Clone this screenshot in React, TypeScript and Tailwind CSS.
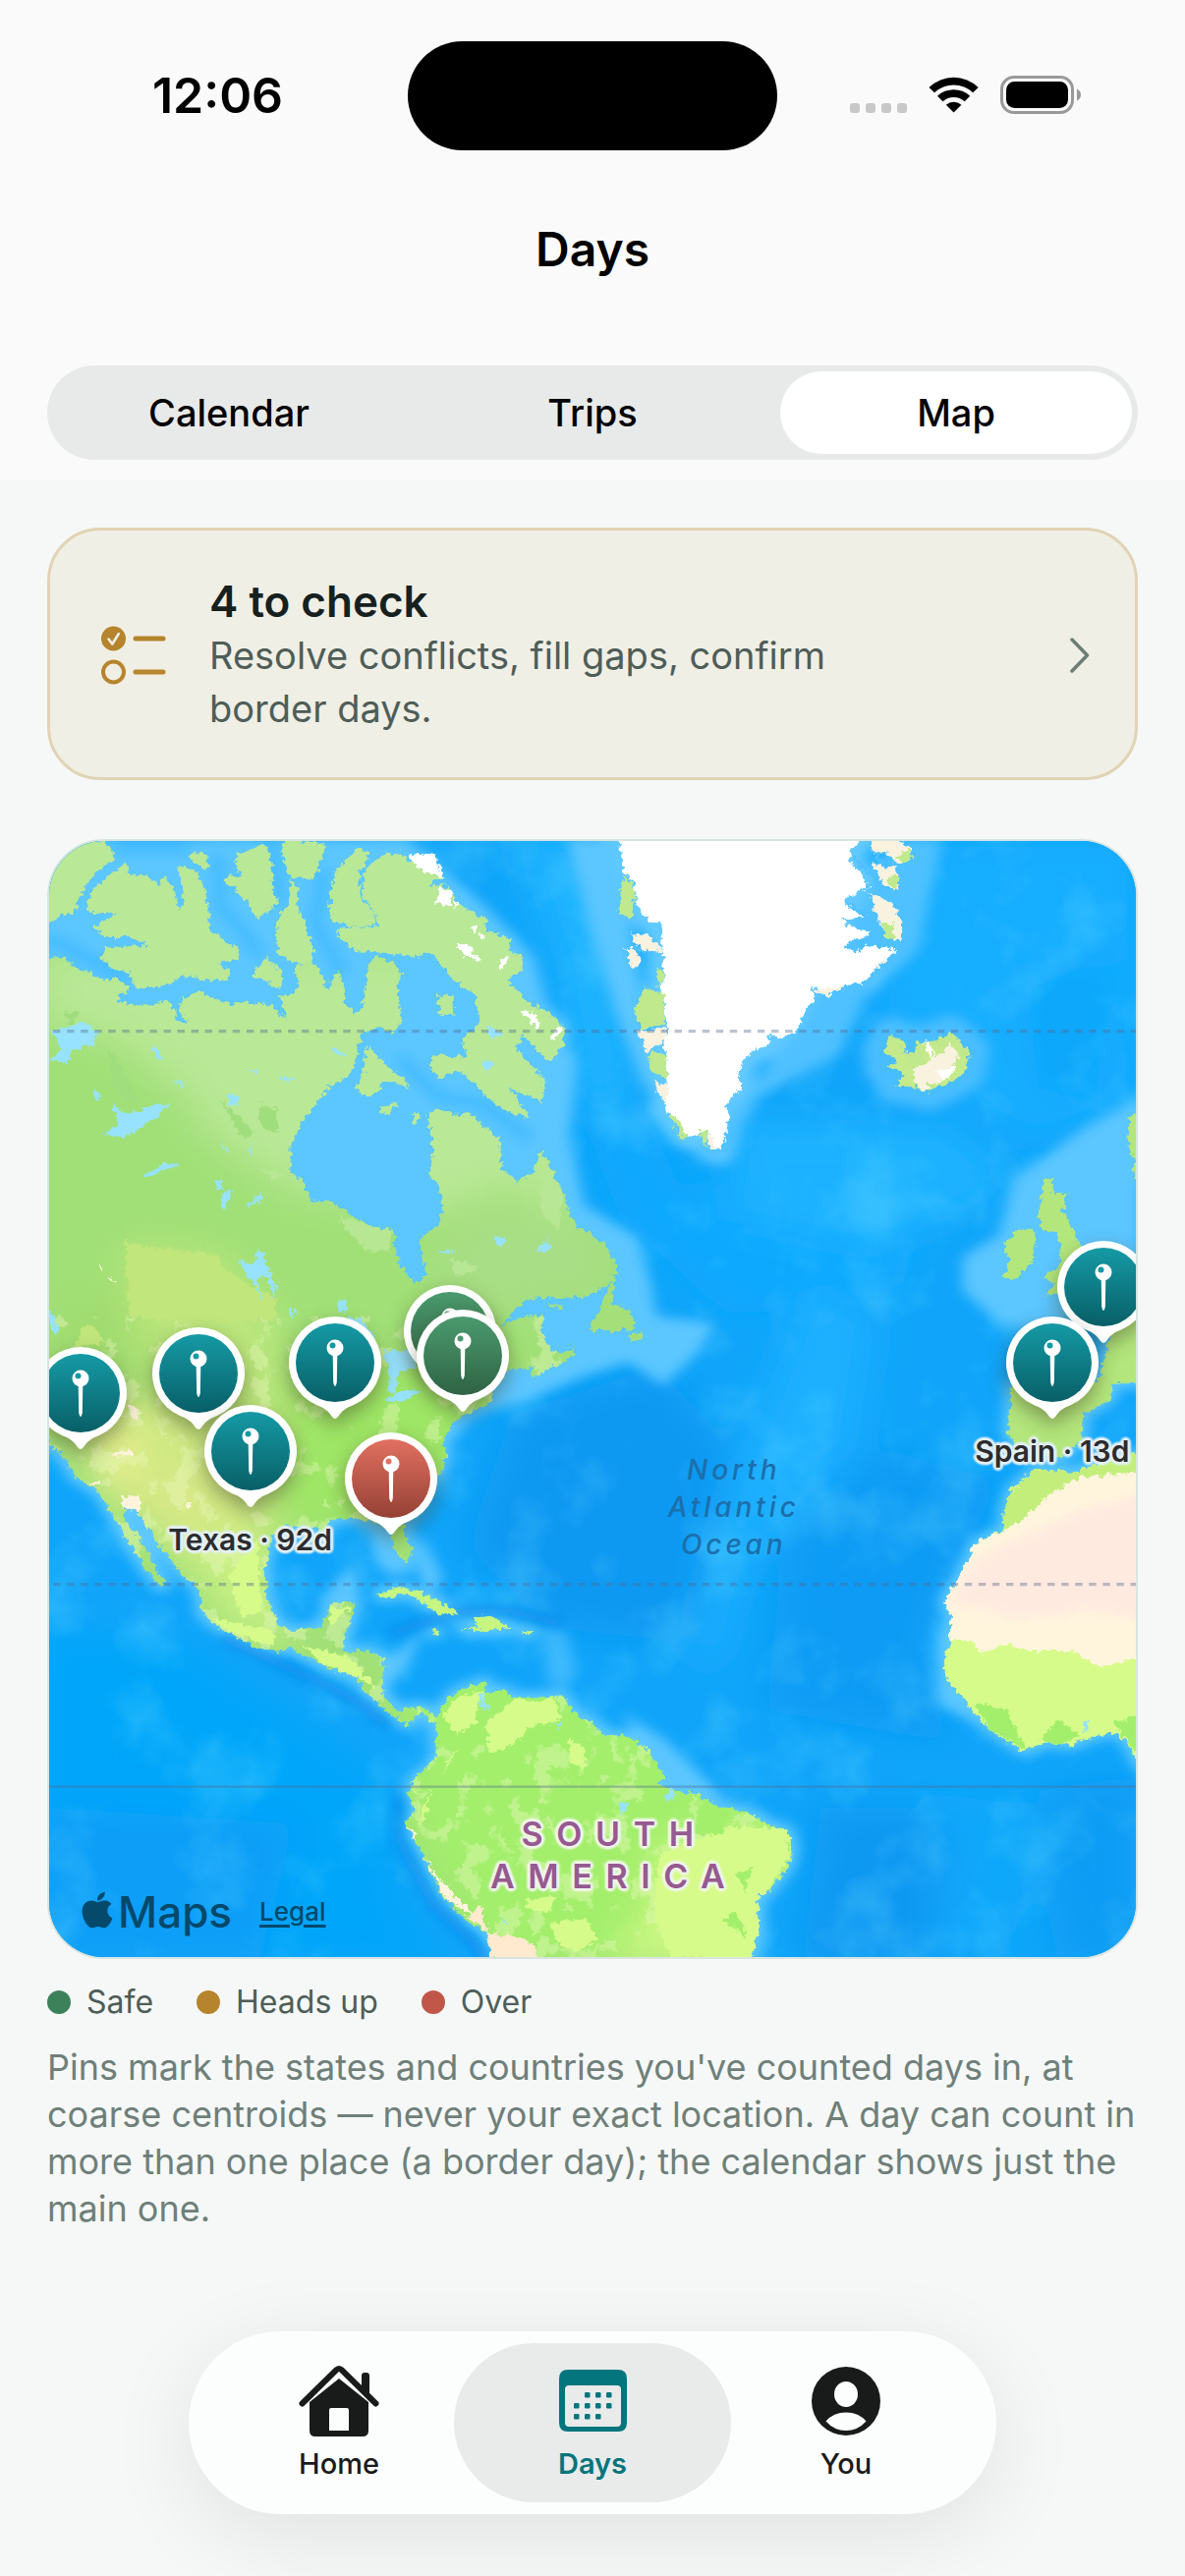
import { useState } from "react";
import { clsx } from "clsx";
import { FaApple } from "react-icons/fa";

type Tone = "teal" | "green" | "red";

interface IPin {
	id: string;
	// Position inside the map, in percent of its width and height
	x: number;
	y: number;
	tone: Tone;
	name: string;
	label?: string;
}

const PINS: IPin[] = [
	{ id: "london", x: 97, y: 40, tone: "teal", name: "England" },
	{ id: "quebec", x: 36.9, y: 43.9, tone: "green", name: "Vermont" },
	{ id: "ny", x: 38.1, y: 46.1, tone: "green", name: "New York" },
	{ id: "mn", x: 26.3, y: 46.7, tone: "teal", name: "Illinois" },
	{ id: "spain", x: 92.3, y: 46.7, tone: "teal", name: "Spain", label: "Spain · 13d" },
	{ id: "utah", x: 13.75, y: 47.7, tone: "teal", name: "Colorado" },
	{ id: "ca", x: 2.9, y: 49.5, tone: "teal", name: "California" },
	{ id: "texas", x: 18.5, y: 54.7, tone: "teal", name: "Texas", label: "Texas · 92d" },
	{ id: "florida", x: 31.5, y: 57.1, tone: "red", name: "Florida" },
];

const TONES: Record<Tone, [string, string]> = {
	teal: ["#159aa5", "#085f67"],
	green: ["#4b9a6e", "#2f6344"],
	red: ["#e17061", "#954135"],
};

const LEGEND = [
	{ label: "Safe", dot: "bg-[#3d815a]" },
	{ label: "Heads up", dot: "bg-[#b5842c]" },
	{ label: "Over", dot: "bg-[#c05748]" },
];

const VIEWS = ["Calendar", "Trips", "Map"];

const MAINLAND =
	"M0 420L40 405L70 403L100 435L140 450L165 468L215 468L240 490L247 510L218 520L218 540L280 552L325 545L345 530L365 550L380 590L395 612L405 600L385 570L390 530L440 507L480 530L530 552L580 540L630 550L650 560L675 595L670 550L660 520L690 525L715 490L700 440L720 420L745 410L770 440L795 510L805 470L820 450L840 480L840 540L865 582L885 560L900 500L905 420L930 400L975 420L998 450L985 500L998 600L970 632L930 615L885 640L870 720L845 775L805 790L775 830L745 870L710 930L690 980L690 1060L720 1080L745 1150L800 1145L850 1185L910 1225L975 1235L985 1330L1035 1402L1065 1370L1045 1260L1100 1220L1112 1160L1100 1110L1070 1060L1085 1000L1070 880L1100 868L1145 885L1180 875L1220 920L1268 960L1270 1050L1315 1090L1360 1060L1380 990L1410 1050L1445 1130L1455 1180L1480 1230L1514 1240L1555 1280L1590 1340L1588 1380L1560 1408L1500 1440L1340 1445L1320 1470L1270 1525L1300 1515L1390 1490L1380 1555L1410 1610L1465 1610L1480 1575L1465 1625L1350 1690L1365 1650L1290 1665L1245 1720L1245 1760L1190 1790L1140 1820L1110 1880L1120 1920L1105 1980L1060 2020L1040 2080L1000 2130L1025 2220L1010 2255L975 2210L970 2160L940 2130L850 2115L795 2120L790 2150L680 2135L640 2170L620 2270L625 2360L660 2440L700 2460L775 2450L800 2380L870 2372L850 2450L830 2520L905 2520L950 2545L940 2640L985 2705L1050 2690L1095 2720L1130 2660L1160 2640L1230 2615L1220 2650L1285 2640L1300 2665L1440 2660L1470 2710L1514 2735L1544 2775L1624 2785L1664 2810L1704 2870L1719 2900L1704 2930L1754 2950L1814 2960L1864 2995L1944 3010L2014 3055L2059 3070L2074 3130L2059 3180L2004 3260L1979 3265L1979 3380L1954 3480L1250 3480L1230 3380L1180 3350L1110 3270L1050 3130L1005 3050L1035 3010L1015 2960L1030 2910L1060 2890L1095 2840L1090 2750L1050 2705L1015 2748L960 2710L900 2650L870 2600L800 2575L740 2540L690 2510L650 2525L600 2510L510 2460L450 2410L440 2330L390 2280L330 2200L275 2100L230 2080L240 2130L285 2190L310 2250L345 2315L335 2325L300 2280L230 2160L205 2110L160 2030L100 1990L60 1920L0 1860Z";

const ISLANDS = [
	"M0 30L180 48L213 100L150 150L120 200L95 270L60 275L27 300L0 300Z",
	"M235 115L245 150L300 155L330 185L340 150L370 190L385 255L400 240L380 120L430 140L450 180L465 250L470 320L550 380L545 410L490 420L525 440L520 470L450 475L415 455L330 495L260 495L250 450L190 435L170 400L180 375L300 365L250 345L180 345L150 310L215 270L150 270L125 240L150 190Z",
	"M410 100L440 80L465 90L460 140L430 120Z",
	"M545 90L620 55L640 110L640 190L655 240L600 285L560 220L510 170L520 150L560 160L540 120Z",
	"M680 40L790 60L755 165L690 160L665 90Z",
	"M690 165L715 190L705 240L730 300L755 380L745 420L700 420L655 390L650 320L660 270L690 240Z",
	"M880 70L915 80L880 140L885 220L925 270L920 305L870 310L800 290L800 200L820 130Z",
	"M905 120L960 90L1000 85L1010 110L1050 90L1112 155L1070 180L1130 190L1150 240L1200 265L1230 290L1225 320L1300 345L1290 380L1325 400L1330 445L1290 470L1340 540L1400 570L1445 620L1440 670L1405 722L1380 700L1330 640L1310 680L1385 770L1385 850L1350 830L1290 800L1352 895L1300 880L1240 840L1160 750L1100 770L1070 740L1090 700L1170 705L1165 650L1210 600L1200 520L1140 470L1080 390L1040 400L960 390L870 385L820 340L820 315L930 310L925 270L895 220L890 170Z",
	"M900 670L940 720L1000 770L1020 800L950 780L910 835L865 805L890 760Z",
	"M1100 515L1140 520L1140 575L1100 580Z",
	"M945 860L985 845L960 885L940 880Z",
	"M1030 880L1043 880L1038 918L1024 900Z",
	"M620 400L670 450L665 495L640 490L585 460Z",
	"M1574 1395L1584 1420L1574 1460L1624 1480L1640 1520L1634 1535L1594 1545L1514 1545L1534 1490L1555 1440Z",
	"M1628 1555L1655 1550L1650 1572L1632 1575Z",
	"M1398 1452L1442 1468L1440 1480L1408 1470Z",
	"M930 2350L990 2325L1050 2345L1110 2375L1155 2410L1095 2410L1060 2375L1010 2345L950 2357Z",
	"M1190 2420L1240 2415L1300 2450L1240 2460L1160 2456L1212 2446Z",
	"M1072 2455L1100 2460L1090 2470Z",
	"M1325 2458L1360 2458L1350 2468L1328 2468Z",
	"M2764 1075L2794 1080L2784 1120L2832 1125L2814 1180L2834 1210L2864 1280L2914 1330L2894 1400L2764 1440L2794 1400L2759 1380L2804 1350L2814 1290L2799 1245L2764 1240L2749 1200Z",
	"M2694 1235L2739 1235L2734 1330L2684 1385L2654 1382L2669 1330L2652 1280Z",
	"M2999 885L3030 880L3030 1080L3010 1080L3012 1010L2996 985Z",
	"M3030 1480L2954 1520L2914 1700L2674 1710L2670 1800L2664 1850L2684 1900L2754 1920L2814 1930L2869 1880L2874 1800L2949 1750L2954 1700L3030 1705Z",
	"M2739 1965L2844 1975L2954 1930L3030 1920L3030 2880L2994 2800L2964 2768L2904 2780L2834 2810L2774 2800L2704 2826L2614 2760L2544 2670L2494 2600L2489 2540L2504 2500L2509 2420L2489 2370L2544 2270L2574 2190L2654 2150L2654 2090L2674 2030Z",
];

const ICELAND =
	"M2344 640L2379 660L2384 700L2409 690L2412 660L2444 665L2464 655L2504 635L2534 660L2559 690L2544 760L2494 790L2444 815L2414 800L2354 795L2379 765L2359 740L2324 738L2364 725L2319 690Z";

const GREENLAND =
	"M1584 20L1604 90L1609 140L1639 180L1639 230L1674 290L1709 300L1717 390L1714 440L1729 455L1704 500L1722 540L1729 620L1719 680L1726 740L1729 800L1719 870L1739 880L1759 920L1784 950L1814 945L1839 930L1844 990L1874 995L1889 940L1899 890L1889 855L1914 820L1934 800L1919 765L1939 720L1959 690L2004 670L2009 640L2034 655L2089 625L2104 570L2134 530L2124 490L2164 520L2214 495L2274 475L2314 420L2359 385L2299 365L2244 385L2214 370L2239 350L2290 330L2234 310L2204 290L2284 275L2250 268L2214 225L2254 205L2284 190L2265 160L2229 110L2234 75L2284 20Z";

const LAKES = [
	"M35 630L120 600L165 630L150 670L90 690L80 730L30 720L60 680Z",
	"M200 855L250 880L320 850L360 855L300 910L240 955L175 945L220 915Z",
	"M345 1028L390 1038L350 1050L315 1070L290 1072Z",
	"M485 1080L505 1085L500 1112L484 1115ZM505 1120L535 1110L520 1150L500 1172Z",
	"M605 1285L652 1410L640 1442L625 1370L600 1380L612 1442L590 1400L545 1330L592 1340Z",
	"M518 820L556 822L545 858L520 850ZM575 745L606 750L600 762ZM660 768L702 775L680 782Z",
	"M575 1165L608 1120L612 1140ZM800 670L846 702L830 706L805 690Z",
	"M140 810L172 825L160 838ZM370 768L405 795L385 792ZM310 665L340 712L325 718Z",
	"M572 1010L590 960L582 1012ZM500 960L525 998L512 990Z",
	"M820 1450L845 1455L840 1492L826 1478ZM690 1475L706 1488L690 1510Z",
	"M1255 1255L1285 1262L1275 1288L1258 1280ZM1365 1300L1400 1262L1408 1295L1370 1305ZM1090 1300L1160 1300L1110 1308Z",
	"M1225 710L1250 730L1235 752L1218 740ZM1230 610L1275 640L1240 655Z",
	"M835 1500L880 1505L925 1560L915 1580L870 1540Z",
	"M945 1600L1035 1605L1040 1660L992 1668L975 1735L958 1730L960 1660Z",
	"M950 1755L1000 1722L1055 1725L1000 1762Z",
	"M1214 2645L1236 2700L1216 2695ZM1420 2745L1438 2735L1432 2758ZM1265 3335L1295 3360L1272 3355Z",
	"M2872 2733L2886 2736L2884 2768L2872 2765ZM1590 2985L1625 2985L1602 3025ZM1720 2980L1740 2940L1750 2975Z",
	"M27 1480L55 1530L45 1558L27 1530Z",
];

const SNOW = [
	"M1020 90L1085 90L1112 158L1070 145L1020 108Z",
	"M1100 190L1138 200L1130 245L1090 238Z",
	"M1155 355L1185 370L1216 418L1170 400L1152 375Z",
	"M1322 565L1365 572L1382 612L1365 620Z",
	"M1275 405L1290 400L1280 436L1262 438ZM1185 305L1205 315L1200 328ZM1210 330L1222 335L1216 352ZM1142 225L1153 238L1145 254Z",
	"M1408 640L1440 610L1430 640L1412 655Z",
	"M2460 755L2510 735L2518 755L2490 778ZM2432 662L2445 662L2465 700L2455 718Z",
];

const CREAM = [
	"M2284 40L2354 40L2400 75L2370 120L2354 110L2330 80L2290 90Z",
	"M2290 115L2360 130L2364 200L2325 185L2300 140Z",
	"M2284 205L2344 240L2374 290L2374 352L2334 345L2304 280Z",
	"M2130 500L2220 495L2165 522ZM2290 440L2340 400L2325 425Z",
	"M1625 335L1665 330L1710 370L1715 385L1665 385ZM1615 380L1635 370L1660 420L1630 442Z",
	"M1645 630L1725 615L1725 655L1670 690Z",
	"M1690 780L1730 790L1730 845L1705 830Z",
	"M1838 930L1870 990L1842 992Z",
	"M2404 745L2480 700L2504 660L2530 700L2500 770L2440 810L2412 795Z",
];

const GREEN_COAST = [
	"M1605 150L1638 190L1630 280L1595 270Z",
	"M1664 495L1718 515L1725 600L1655 625L1638 560Z",
	"M1682 690L1722 700L1728 775L1678 750Z",
	"M1735 875L1765 910L1785 955L1765 955Z",
	"M1815 930L1838 930L1836 985L1818 955Z",
	"M1695 435L1728 455L1705 495Z",
	"M2360 100L2385 75L2404 95L2375 118ZM2330 155L2368 155L2350 200ZM2322 300L2352 300L2350 352L2325 340Z",
	"M2385 700L2440 680L2430 730L2385 740ZM2460 660L2510 640L2505 665L2470 690ZM2524 680L2555 690L2540 720ZM2445 790L2470 785L2455 808Z",
];

const MapCanvas = () => {
	return (
		<svg
			viewBox="27 48 2990 3408"
			preserveAspectRatio="none"
			className="block size-full"
			aria-hidden="true"
		>
			<defs>
				<filter id="coast" filterUnits="userSpaceOnUse" x="0" y="0" width="3060" height="3480">
					<feTurbulence type="fractalNoise" baseFrequency="0.06" numOctaves="3" seed="4" />
					<feDisplacementMap in="SourceGraphic" scale="28" xChannelSelector="R" yChannelSelector="G" />
				</filter>
				<filter id="soft" filterUnits="userSpaceOnUse" x="-200" y="-200" width="3500" height="3900">
					<feGaussianBlur stdDeviation="18" />
				</filter>
				<filter id="haze" filterUnits="userSpaceOnUse" x="-200" y="-200" width="3500" height="3900">
					<feGaussianBlur stdDeviation="55" />
				</filter>
				<filter id="swell" filterUnits="userSpaceOnUse" x="0" y="0" width="3060" height="3480">
					<feTurbulence type="fractalNoise" baseFrequency="0.005 0.004" numOctaves="4" seed="11" />
					<feColorMatrix values="0 0 0 0 0.16  0 0 0 0 0.73  0 0 0 0 1  2.6 0 0 0 -1.3" />
				</filter>
				<filter id="scrub" filterUnits="userSpaceOnUse" x="0" y="1500" width="3060" height="1980">
					<feTurbulence type="fractalNoise" baseFrequency="0.014 0.01" numOctaves="3" seed="7" />
					<feColorMatrix values="0 0 0 0 0.84  0 0 0 0 0.96  0 0 0 0 0.53  16 0 0 0 -9" />
				</filter>
				<clipPath id="mainland">
					<path d={MAINLAND} />
				</clipPath>
				<clipPath id="africa">
					<path d={ISLANDS[ISLANDS.length - 1]} />
				</clipPath>
			</defs>

			<rect x="0" y="0" width="3060" height="3480" fill="#10a5fa" />

			{/* Sea floor */}
			<g filter="url(#haze)">
				<path d="M0 2450L400 2500L1000 2950L980 3300L1150 3480H0Z" fill="#06a6fa" />
				<path d="M0 3000L700 3050L600 3480H0Z" fill="#109ff8" />
				<path d="M1300 30L1560 30L1600 420L1640 800L1480 900L1420 420Z" fill="#1fb3ff" />
				<path d="M1480 850L1680 900L1760 1100L2300 1050L2400 1400L1900 1500L1600 1200Z" fill="#09a9ff" />
				<path d="M2330 30L3030 30L3030 900L2700 960L2300 600Z" fill="#16aeff" />
				<path d="M2720 500L2950 400L2900 850L2750 800Z" fill="#0aa6fb" />
				<path d="M1900 900L2500 900L2700 1100L2300 1300L1900 1200Z" fill="#1bb2ff" />
				<path d="M1300 1800L1700 1650L1900 1900L1850 2500L1400 2450L1180 2200Z" fill="#0d98f2" />
				<path d="M2300 1900L2640 2000L2440 2500L2500 2800L2000 2700L2050 2200Z" fill="#0d9bf5" />
				<path d="M2150 3000L2500 3000L2450 3480L2100 3480Z" fill="#0a98f2" />
				<path d="M2750 2950L3030 2900L3030 3480L2800 3480Z" fill="#0f9cf5" />
				<path d="M2120 1400L2300 1500L2250 1900L1950 2200L1850 2600L1780 2500L1900 2000Z" fill="#1cb0ff" />
				<path d="M2400 2950L2800 3000L2650 3480L2450 3480L2560 3200Z" fill="#08a8fb" />
			</g>
			<g opacity="0.3">
				<rect x="0" y="0" width="3060" height="3480" filter="url(#swell)" />
			</g>

			{/* Shallow water */}
			<g filter="url(#soft)">
				<g fill="#63caff" stroke="#63caff" strokeWidth="50" strokeLinejoin="round">
					<path d={MAINLAND} strokeWidth="34" />
					{ISLANDS.map((island) => (
						<path key={island} d={island} strokeWidth="30" />
					))}
					<path d={GREENLAND} strokeWidth="80" />
				</g>
				<path d={ICELAND} fill="#4abeff" stroke="#4abeff" strokeWidth="110" strokeLinejoin="round" />
				<g fill="#5cc6ff">
					<path d="M0 40L1010 40L1230 250L1360 400L1400 560L1480 720L1460 950L1500 1160L1650 1260L1700 1500L1860 1520L1820 1600L1720 1710L1620 1640L1500 1680L1340 1760L1200 1790L1140 1880L900 1400L600 1200L0 700Z" />
					<path d="M1450 40L1584 40L1720 900L1650 760L1580 560L1540 400Z" />
					<path d="M2350 40L2480 40L2420 380L2300 460L2200 700L1980 830L1900 1000L1800 1020L2100 600Z" fill="#50c1ff" />
					<path d="M3030 830L2880 920L2680 1080L2640 1250L2540 1320L2540 1420L2640 1520L2720 1540L2900 1500L3030 1480Z" />
					<path d="M910 2130L1000 2130L1030 2280L960 2290L920 2240Z" />
					<path d="M1050 2160L1110 2300L1080 2350L1040 2280Z" />
					<path d="M770 2370L860 2260L880 2340L850 2400L790 2420Z" />
					<path d="M950 2560L1060 2450L1010 2570L960 2630Z" />
					<path d="M1380 2440L1450 2460L1480 2590L1440 2640L1400 2620Z" opacity="0.6" />
					<path d="M1600 2710L1720 2790L1850 2930L1900 3000L1740 2960Z" />
					<path d="M2470 2400L2470 2680L2600 2760L2520 2600Z" />
				</g>
				{/* Deeper channels between the arctic islands */}
				<g stroke="#45bcff" strokeWidth="40" strokeLinecap="round" fill="none">
					<path d="M220 70L400 70M490 100L500 250L580 350L600 390M640 60L660 220M780 150L760 300L830 440" />
					<path d="M1000 720L1100 830L1220 850L1340 950M40 350L140 410L230 460" />
				</g>
			</g>
			{/* Deep trenches along the Pacific coast */}
			<g stroke="#0a8cec" strokeWidth="26" fill="none" filter="url(#soft)">
				<path d="M500 2480L640 2550L780 2620L880 2680L960 2750" />
				<path d="M985 2960L990 3100L1080 3290L1200 3420L1240 3480" />
				<path d="M960 2470L1150 2400L1300 2400L1440 2440" />
			</g>

			<g filter="url(#coast)">
				<path d={MAINLAND} fill="#a1e077" />
				<g clipPath="url(#mainland)">
					<g filter="url(#haze)">
						<path d="M0 380L1100 380L1400 900L1480 1240L1300 1100L1070 1190L1000 1160L700 1120L480 960L380 800L180 640L0 600Z" fill="#b9e896" />
						<path d="M1200 1160L1600 1240L1560 1440L1200 1500L1060 1350Z" fill="#a8de85" />
						<path d="M60 1450L300 1400L300 1700L0 1800Z" fill="#a0dc70" />
						<path d="M700 1700L1250 1620L1120 2000L950 2140L660 2130Z" fill="#9ee665" />
						<path d="M230 1280L500 1310L650 1500L680 1800L640 2100L400 1900L260 1500Z" fill="#bbe67c" />
						<path d="M80 1760L400 1750L650 2130L560 2440L380 2230L180 2030Z" fill="#d0e983" />
						<path d="M160 1850L240 1840L260 2050L180 2030Z" fill="#f1ef93" />
						<path d="M380 1990L430 2000L420 2110L370 2080Z" fill="#eee594" />
						<path d="M1010 2450L2060 2640L2100 3480L1240 3480L1000 3000Z" fill="#a3ef6c" />
						<path d="M1700 3120L2080 3060L2010 3480L1560 3480L1690 3300Z" fill="#cdf884" />
						<path d="M420 2200L620 2180L700 2500L520 2450Z" fill="#c9f184" />
					</g>
					<g opacity="0.4">
						<rect x="0" y="1500" width="3060" height="1980" filter="url(#scrub)" />
					</g>
					<g fill="#c1e67c">
						<path d="M235 1270L300 1290L495 1310L500 1345L570 1400L650 1440L650 1510L400 1520L250 1500Z" />
						<path d="M120 1525L155 1530L180 1580L100 1595Z" />
					</g>
					<g fill="#a0dd7d">
						<path d="M195 690L255 790L280 850L240 850L200 790ZM500 840L560 900L590 940L560 960ZM610 850L655 870L650 940L610 920ZM60 570L110 570L90 610Z" />
					</g>
					<g fill="#b9e896" opacity="0.9">
						<path d="M820 1190L970 1240L960 1300L900 1300L850 1240ZM1380 1000L1440 1120L1430 1240L1380 1180ZM1130 1320L1215 1350L1150 1380ZM610 1050L690 1070L650 1080Z" />
					</g>
					<g fill="#d6fb8a">
						<path d="M1110 2720L1140 2670L1220 2640L1200 2740L1150 2780Z" />
						<path d="M1235 2830L1230 2740L1310 2665L1370 2680L1410 2660L1440 2730L1360 2750L1300 2810L1250 2833Z" />
						<path d="M1455 2790L1500 2820L1500 2880L1460 2860Z" />
						<path d="M1704 3140L1900 3060L2059 3060L2074 3130L2000 3260L1979 3460L1740 3460L1690 3330Z" />
						<path d="M1340 3280L1420 3270L1400 3320L1340 3310ZM1410 3350L1500 3340L1540 3400L1480 3440L1420 3410Z" />
						<path d="M800 2390L860 2385L800 2450ZM720 2500L860 2545L930 2640L900 2620L780 2560ZM520 2290L600 2180L610 2400L560 2420ZM470 2420L640 2460L650 2510L520 2460Z" />
						<path d="M1125 2850L1150 2820L1110 2900ZM1080 2930L1060 3030L1040 3060Z" />
					</g>
					<g fill="#a3ef6c">
						<path d="M1814 2990L1900 3000L1880 3080L1800 3080ZM1920 3200L1960 3180L1940 3260ZM1880 3340L1920 3320L1950 3400ZM2050 3100L2074 3110L2060 3140Z" />
					</g>
					<g fill="#fef3dc">
						<path d="M225 2050L280 2045L275 2100L225 2085ZM200 1915L255 1905L255 1925L205 1930ZM130 2005L175 2005L160 2018ZM405 2065L420 2070L412 2095Z" />
						<path d="M1005 3050L1035 3080L1035 3100L1010 3090ZM1060 3150L1120 3280L1200 3340L1190 3320L1110 3230Z" />
						<path d="M1180 3330L1215 3300L1235 3380L1330 3400L1370 3430L1365 3480L1240 3480L1230 3380Z" fill="#ffe9cf" />
						<path d="M248 1770L270 1770L268 1815L250 1810ZM165 1338L180 1355L172 1362ZM190 1375L210 1398L195 1390Z" />
					</g>
				</g>
				{ISLANDS.map((island, index) => (
					<path
						key={island}
						d={island}
						fill={index < 13 ? "#b9e896" : index < 16 ? "#a5df7a" : index < 20 ? "#c6f580" : "#b3e67c"}
					/>
				))}
				<g clipPath="url(#africa)">
					<path d="M2400 1900L3030 1900L3030 2880L2400 2880Z" fill="#d6fb8a" />
					<path d="M2739 1960L3030 1900L3030 1990L2864 1990L2654 2180L2640 2080Z" fill="#c3ee7b" />
					<path
						d="M3030 1975L2864 1990L2784 2040L2714 2110L2654 2155L2560 2190L2520 2270L2470 2370L2500 2400L2500 2490L2564 2490L2594 2530L2664 2500L2714 2520L2844 2520L2914 2570L3030 2540Z"
						fill="#fff5dd"
					/>
					<g filter="url(#soft)">
						<path d="M3060 2040L2874 2090L2654 2200L2560 2260L2500 2380L2620 2390L2660 2420L2840 2410L2860 2390L3060 2430Z" fill="#ffeae0" />
					</g>
					<g fill="#a3ef6c">
						<path d="M2574 2680L2664 2700L2714 2826L2614 2760ZM2754 2790L2804 2730L2864 2780L2804 2810ZM2950 2740L3030 2720L3030 2850L2990 2790Z" />
					</g>
				</g>
				<path d={GREENLAND} fill="#fff" />
				<path d={ICELAND} fill="#c5ea8b" />
				{CREAM.map((patch) => (
					<path key={patch} d={patch} fill="#f8f2df" />
				))}
				{GREEN_COAST.map((patch) => (
					<path key={patch} d={patch} fill="#bfe98c" />
				))}
				{SNOW.map((patch) => (
					<path key={patch} d={patch} fill="#fff" />
				))}
				{LAKES.map((lake) => (
					<path key={lake} d={lake} fill="#97e3ff" />
				))}
				<g stroke="#4fbfff" strokeWidth="9" fill="none">
					<path d="M2240 100L2290 150L2330 200M2215 235L2270 270L2320 310M2250 380L2290 340L2300 290M2285 70L2330 130M1630 365L1680 400" />
				</g>
			</g>

			{/* Arctic circle, tropic of Cancer and equator */}
			<g stroke="#52698f" strokeOpacity="0.4" fill="none">
				<path d="M0 629H3060" strokeWidth="10" strokeDasharray="20 18" />
				<path d="M0 2318H3060" strokeWidth="10" strokeDasharray="20 18" />
				<path d="M0 2936H3060" strokeWidth="7" />
			</g>
		</svg>
	);
};

const MapPin = ({ pin }: { pin: IPin }) => {
	const [from, to] = TONES[pin.tone];

	return (
		<button
			type="button"
			aria-label={pin.name}
			className="absolute size-[94px] -translate-1/2"
			style={{ left: `${pin.x}%`, top: `${pin.y}%` }}
		>
			<svg viewBox="0 0 94 94" className="size-full overflow-visible drop-shadow-[0_8px_10px_rgba(60,60,30,0.45)]">
				<defs>
					<linearGradient id={`fill-${pin.id}`} x1="0" y1="0" x2="0" y2="1">
						<stop offset="0" stopColor={from} />
						<stop offset="1" stopColor={to} />
					</linearGradient>
				</defs>
				<path
					d="M47 0a47 47 0 0 1 19 90c-8 3-12 6-16 12q-3 4-6 0c-4-6-8-9-16-12A47 47 0 0 1 47 0Z"
					fill="#fff"
				/>
				<circle cx="47" cy="47" r="40" fill={`url(#fill-${pin.id})`} />
				<circle cx="47" cy="32" r="8.5" fill="#fff" />
				<path d="M44.7 39h4.600l-.5 28q-1.800 8-3.600 0Z" fill="#fff" />
				<circle cx="44.500" cy="29.500" r="3" fill={from} />
			</svg>
			{pin.label ? (
				<span className="absolute top-[117px] left-1/2 -translate-x-1/2 text-[30px] leading-[40px] font-semibold whitespace-nowrap text-[#2c2c2e] [text-shadow:0_0_4px_#e4f0f4,0_3px_2px_#e4f0f4,0_-3px_2px_#e4f0f4,3px_0_2px_#e4f0f4,-3px_0_2px_#e4f0f4,2px_2px_2px_#e4f0f4,-2px_-2px_2px_#e4f0f4,2px_-2px_2px_#e4f0f4,-2px_2px_2px_#e4f0f4]">
					{pin.label}
				</span>
			) : null}
		</button>
	);
};

const StatusBar = () => {
	return (
		<div className="grid h-[194px] grid-cols-[1fr_376px_1fr] items-center">
			<time className="justify-self-center pl-7 text-[50px] leading-[60px] font-semibold">12:06</time>
			<div className="h-[111px] rounded-full bg-black" />
			<svg viewBox="0 0 236 40" className="ml-[74px] h-10 w-[236px]" aria-hidden="true">
				<g fill="#c8c8c8">
					<rect x="0" y="28" width="10" height="10" rx="3" />
					<rect x="16" y="28" width="10" height="10" rx="3" />
					<rect x="32" y="28" width="10" height="10" rx="3" />
					<rect x="48" y="28" width="10" height="10" rx="3" />
				</g>
				<path d="M80.500 12 86 17.300a28.500 28.500 0 0 1 39.200 0l5.500-5.300a36 36 0 0 0-50.200 0Z" />
				<path d="m89 20.800 5.500 5.400a16.500 16.500 0 0 1 22.200 0l5.500-5.400a24 24 0 0 0-33.200 0Z" />
				<path d="m97.800 29.800 7.800 7.700 7.800-7.700a11.500 11.500 0 0 0-15.600 0Z" />
				<rect x="154.500" y="1.500" width="72" height="36" rx="12.500" fill="none" stroke="#999" strokeWidth="3" />
				<rect x="159" y="6" width="63" height="27" rx="8.500" />
				<path d="M231 13.500q4 2 4 6t-4 6Z" fill="#999" />
			</svg>
		</div>
	);
};

const ChecklistIcon = () => {
	return (
		<svg viewBox="0 0 66 60" className="h-[60px] w-[66px] shrink-0" aria-hidden="true">
			<circle cx="12.500" cy="13" r="12.500" fill="#b5842c" />
			<path d="m7.500 13.500 3.800 5 6.500-10.500" fill="none" stroke="#f0efe5" strokeWidth="2.600" strokeLinecap="round" strokeLinejoin="round" />
			<circle cx="12.500" cy="47" r="10.500" fill="none" stroke="#b5842c" strokeWidth="4" />
			<path d="M35 13h28M35 47h28" stroke="#b5842c" strokeWidth="5" strokeLinecap="round" />
		</svg>
	);
};

const HomeIcon = () => {
	return (
		<svg viewBox="0 0 82 74" className="h-[74px] w-[82px]" aria-hidden="true" fill="currentColor">
			<path d="M64 11q0-3 3-3h2q3 0 3 3v20l-8-8Z" />
			<path d="M3.500 39.500 38.500 5q2.500-2 5 0l35 34.500" fill="none" stroke="currentColor" strokeWidth="6" strokeLinecap="round" />
			<path fillRule="evenodd" d="M41 14 71 38v29q0 6-6 6H17q-6 0-6-6V38ZM33 44q-2 0-2 2v21h20V46q0-2-2-2Z" />
		</svg>
	);
};

const DaysIcon = () => {
	const dots = [
		[29, 25], [40, 25], [51, 25],
		[18, 36], [29, 36], [40, 36], [51, 36],
		[18, 47], [29, 47], [40, 47],
	];

	return (
		<svg viewBox="0 0 69 74" className="h-[74px] w-[69px]" aria-hidden="true" fill="currentColor">
			<path
				fillRule="evenodd"
				d="M9 5h51q9 0 9 9v45q0 9-9 9H9q-9 0-9-9V14q0-9 9-9Zm1 16q-4 0-4 4v34q0 4 4 4h49q4 0 4-4V25q0-4-4-4Z"
			/>
			{dots.map(([x, y]) => (
				<rect key={`${x}-${y}`} x={x - 3} y={y + 3} width="5.500" height="5.500" rx="1.300" />
			))}
		</svg>
	);
};

const YouIcon = () => {
	return (
		<svg viewBox="0 0 70 74" className="h-[74px] w-[70px]" aria-hidden="true" fill="currentColor">
			<circle cx="35" cy="37" r="35" />
			<ellipse cx="35" cy="30" rx="12" ry="13" fill="#fcfefd" />
			<path d="M14.500 57.500Q22 48.500 35 48.500t20.500 9Q47 67 35 67t-20.500-9.500Z" fill="#fcfefd" />
		</svg>
	);
};

const TABS = [
	{ label: "Home", href: "#home", Icon: HomeIcon },
	{ label: "Days", href: "#days", Icon: DaysIcon },
	{ label: "You", href: "#you", Icon: YouIcon },
];

export default function App() {
	const [view, setView] = useState("Map");

	return (
		<div className="flex min-h-screen flex-col bg-[#f5f8f7] font-[Inter,'Liberation_Sans',sans-serif] text-black">
			<header className="bg-[#fafafa] pb-[21px]">
				<StatusBar />
				<h1 className="pt-7 text-center text-[48px] leading-[64px] font-semibold">Days</h1>
				<div role="tablist" aria-label="View" className="mx-12 mt-[86px] grid h-24 grid-cols-3 rounded-full bg-[#e8eae9]">
					{VIEWS.map((item) => (
						<button
							key={item}
							type="button"
							role="tab"
							aria-selected={view === item}
							onClick={() => setView(item)}
							className="p-1.5 text-[38px] leading-[48px] font-medium"
						>
							<span
								className={clsx(
									"flex size-full items-center justify-center rounded-full",
									view === item && "bg-white",
								)}
							>
								{item}
							</span>
						</button>
					))}
				</div>
			</header>

			<main className="flex flex-col px-12 pt-12">
				<button
					type="button"
					className="flex items-center rounded-[54px] border-3 border-[#e1d3b4] bg-[#f0efe5] pt-[45px] pb-[43px] pr-[46px] pl-[52px] text-left"
				>
					<ChecklistIcon />
					<span className="ml-11 flex flex-1 flex-col">
						<span className="text-[44px] leading-[55px] font-semibold text-[#16211f]">4 to check</span>
						<span className="max-w-[700px] text-[38px] leading-[54px] text-[#4e5d58]">
							Resolve conflicts, fill gaps, confirm border days.
						</span>
					</span>
					<svg viewBox="0 0 20 36" className="h-9 w-5" aria-hidden="true">
						<path d="m2 2 15.500 16L2 34" fill="none" stroke="#6c7d77" strokeWidth="3.500" strokeLinecap="round" strokeLinejoin="round" />
					</svg>
				</button>

				<section
					aria-label="Map of counted days"
					className="relative mt-[60px] aspect-[1110/1140] overflow-hidden rounded-[58px] border-2 border-[#d9e4e0] bg-[#10a5fa]"
				>
					<MapCanvas />
					<p className="absolute top-[54.700%] left-[63%] -translate-x-1/2 text-center text-[28px] leading-[38px] font-medium tracking-[0.14em] text-[#1b6fab] italic">
						North
						<br />
						Atlantic
						<br />
						Ocean
					</p>
					<p className="absolute top-[87.100%] left-[52%] -translate-x-1/2 text-center text-[34px] leading-[43px] font-semibold tracking-[0.4em] text-[#965a91] [text-shadow:0_0_4px_#f0f5e8,0_3px_2px_#f0f5e8,0_-3px_2px_#f0f5e8,3px_0_2px_#f0f5e8,-3px_0_2px_#f0f5e8,2px_2px_2px_#f0f5e8,-2px_-2px_2px_#f0f5e8,2px_-2px_2px_#f0f5e8,-2px_2px_2px_#f0f5e8]">
						SOUTH
						<br />
						AMERICA
					</p>
					{PINS.map((pin) => (
						<MapPin key={pin.id} pin={pin} />
					))}
					<div className="absolute bottom-[18px] left-7 flex items-center text-[#05496b]">
						<FaApple className="mb-1 size-[42px]" />
						<span className="text-[44px] leading-[56px] font-medium">Maps</span>
						<a href="#legal" className="ml-7 text-[26px] leading-[56px] font-medium underline decoration-3 underline-offset-4">
							Legal
						</a>
					</div>
				</section>

				<ul className="mt-6 flex gap-11 text-[32px] leading-[40px] text-[#4e5d58]">
					{LEGEND.map((item) => (
						<li key={item.label} className="flex items-center gap-4">
							<span className={clsx("size-6 rounded-full", item.dot)} />
							{item.label}
						</li>
					))}
				</ul>
				<p className="mt-[22px] text-[36px] leading-[48px] text-[#6f7f79]">
					Pins mark the states and countries you've counted days in, at coarse centroids — never your exact
					location. A day can count in more than one place (a border day); the calendar shows just the main one.
				</p>
			</main>

			<nav
				aria-label="Main"
				className="mx-auto mt-auto mb-[63px] flex -space-x-6 rounded-full bg-[#fcfefd] p-3 shadow-[0_20px_90px_rgba(0,0,0,0.09)]"
			>
				{TABS.map(({ label, href, Icon }) => {
					const active = label === "Days";

					return (
						<a
							key={label}
							href={href}
							aria-current={active ? "page" : undefined}
							className={clsx(
								"flex h-[162px] w-[282px] flex-col items-center rounded-full pt-[22px]",
								active ? "bg-[#e8ebea] text-[#04757c]" : "text-[#191b1a]",
							)}
						>
							<Icon />
							<span
								className={clsx("mt-2 text-[29px] leading-[38px]", active ? "font-semibold" : "font-medium")}
							>
								{label}
							</span>
						</a>
					);
				})}
			</nav>
		</div>
	);
}
